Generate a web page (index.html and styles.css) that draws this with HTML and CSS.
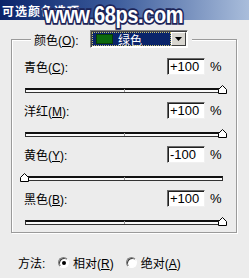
FILE: index.html
```html
<!DOCTYPE html>
<html>
<head>
<meta charset="utf-8">
<link rel="stylesheet" href="styles.css">
</head>
<body>
<div class="window">
  <div class="titlebar"><span class="title">可选颜色选项</span></div>
  <div class="content">
    <div class="group">
      <div class="legend">
        <span class="label">颜色(<u>O</u>):</span>
        <div class="select">
          <div class="sel-value"><span class="swatch"></span><span class="sel-text">绿色</span></div>
          <div class="sel-btn"><svg width="7" height="4" viewBox="0 0 7 4"><path d="M0 0H7L3.5 4Z" fill="#000"/></svg></div>
        </div>
      </div>

      <div class="adjs">
        <div class="adj">
          <div class="row"><span class="label">青色(<u>C</u>):</span><div class="input">+100</div><span class="pct">%</span></div>
          <div class="slider"><div class="track"><span class="tick"></span></div><svg class="thumb" style="left:100%" width="9" height="9" viewBox="0 0 9 9"><path d="M0.5 8.5V4.5L4.5 0.5L8.5 4.5V8.5Z" fill="#fff" stroke="#000"/></svg></div>
        </div>
        <div class="adj">
          <div class="row"><span class="label">洋红(<u>M</u>):</span><div class="input">+100</div><span class="pct">%</span></div>
          <div class="slider"><div class="track"><span class="tick"></span></div><svg class="thumb" style="left:100%" width="9" height="9" viewBox="0 0 9 9"><path d="M0.5 8.5V4.5L4.5 0.5L8.5 4.5V8.5Z" fill="#fff" stroke="#000"/></svg></div>
        </div>
        <div class="adj">
          <div class="row"><span class="label">黄色(<u>Y</u>):</span><div class="input">-100</div><span class="pct">%</span></div>
          <div class="slider"><div class="track"><span class="tick"></span></div><svg class="thumb" style="left:0%" width="9" height="9" viewBox="0 0 9 9"><path d="M0.5 8.5V4.5L4.5 0.5L8.5 4.5V8.5Z" fill="#fff" stroke="#000"/></svg></div>
        </div>
        <div class="adj">
          <div class="row"><span class="label">黑色(<u>B</u>):</span><div class="input">+100</div><span class="pct">%</span></div>
          <div class="slider"><div class="track"><span class="tick"></span></div><svg class="thumb" style="left:100%" width="9" height="9" viewBox="0 0 9 9"><path d="M0.5 8.5V4.5L4.5 0.5L8.5 4.5V8.5Z" fill="#fff" stroke="#000"/></svg></div>
        </div>
      </div>
    </div>

    <div class="method">
      <span class="m-label">方法:</span>
      <span class="radio checked"></span><span class="r-text">相对(<u>R</u>)</span>
      <span class="radio"></span><span class="r-text">绝对(<u>A</u>)</span>
    </div>
  </div>
  <div class="watermark">www.68ps.com</div>
</div>
</body>
</html>
```

FILE: styles.css
```css
* { box-sizing: border-box; }
html, body { margin: 0; padding: 0; }
body {
  width: 249px;
  height: 278px;
  overflow: hidden;
  background: #ececec;
  font-family: "Liberation Sans", "Noto Sans CJK SC", sans-serif;
  font-size: 12px;
  color: #000;
}
.window { position: relative; width: 249px; height: 278px; }

.titlebar {
  height: 20px;
  background: linear-gradient(to right, #0a246a 0%, #3a5a9a 45%, #a9bddb 100%);
  padding-left: 2px;
  display: flex;
  align-items: center;
}
.title {
  color: #fff;
  font-weight: bold;
  font-size: 12px;
  letter-spacing: 1px;
  font-family: "Noto Sans CJK SC", sans-serif;
}

.content { padding: 19px 12px 0 11px; }

.group {
  height: 194px;
  border: 1px solid #9a9a9a;
  box-shadow: inset 1px 1px 0 #fff, 1px 1px 0 #fff;
  padding: 0 12px 0 12px;
}

.legend {
  display: flex;
  align-items: center;
  width: fit-content;
  margin: -10px 0 0 7px;
  padding: 0 4px 0 3px;
  background: #ececec;
  height: 18px;
}
.legend .label { width: 56px; }

.label { font-family: "Liberation Sans", "Noto Sans CJK SC", sans-serif; }
u { text-decoration-thickness: 1px; text-underline-offset: 1px; }

.select {
  position: relative;
  z-index: 2;
  display: flex;
  width: 98px;
  height: 18px;
  border: 1px solid;
  border-color: #808080 #fff #fff #808080;
  box-shadow: inset 1px 1px 0 #404040;
  padding: 1px;
  background: #fff;
}
.sel-value {
  flex: 1;
  background: #0a246a;
  outline: 1px dotted #c8c070;
  outline-offset: -1px;
  display: flex;
  align-items: center;
  padding-left: 4px;
}
.swatch {
  width: 17px;
  height: 10px;
  background: #0d6a0d;
  border: 1px solid #0a3a0a;
}
.sel-text {
  color: #fff;
  margin-left: 5px;
  font-family: "Noto Sans CJK SC", sans-serif;
}
.sel-btn {
  width: 15px;
  background: #d8d6d0;
  border: 1px solid;
  border-color: #fff #404040 #404040 #fff;
  display: flex;
  align-items: center;
  justify-content: center;
}

.adjs { margin-top: 10px; }
.row {
  display: flex;
  align-items: center;
  height: 17px;
}
.row .label { flex: 1; }
.input {
  width: 38px;
  height: 17px;
  background: #fff;
  border: 1px solid;
  border-color: #6a6a6a #f0f0f0 #f0f0f0 #6a6a6a;
  box-shadow: inset 1px 1px 0 #202020;
  font-size: 13px;
  line-height: 15px;
  padding-left: 2px;
}
.pct { width: 14px; margin-left: 5px; font-size: 13px; }

.slider {
  position: relative;
  margin: 13px 0 9px 1px;
  width: 198px;
  height: 5px;
}
.track {
  height: 5px;
  border: 1px solid #333;
  border-top: 2px solid #111;
  background: #fafafa;
  position: relative;
}
.tick {
  position: absolute;
  left: 98px;
  top: -1px;
  width: 1px;
  height: 3px;
  background: #999;
}
.thumb {
  position: absolute;
  top: -3px;
  transform: translateX(-5px);
}

.method {
  display: flex;
  align-items: center;
  margin-top: 21px;
  padding-left: 7px;
  height: 16px;
}
.m-label { width: 40px; }
.radio {
  width: 11px;
  height: 11px;
  border-radius: 50%;
  border: 1px solid;
  border-color: #808080 #fff #fff #808080;
  box-shadow: inset 1px 1px 0 #404040;
  background: #fff;
  position: relative;
  margin-right: 4px;
}
.radio.checked::after {
  content: "";
  position: absolute;
  left: 3px;
  top: 3px;
  width: 4px;
  height: 4px;
  border-radius: 50%;
  background: #000;
}
.r-text { margin-right: 12px; }

.watermark {
  position: absolute;
  z-index: 1;
  left: 44px;
  top: 3px;
  font-family: "Liberation Sans", sans-serif;
  font-weight: bold;
  font-size: 27px;
  line-height: 27px;
  color: #fff;
  -webkit-text-stroke: 4px #1c2458;
  paint-order: stroke fill;
  transform: scale(0.74, 0.9);
  transform-origin: left top;
  letter-spacing: -0.5px;
}
```
